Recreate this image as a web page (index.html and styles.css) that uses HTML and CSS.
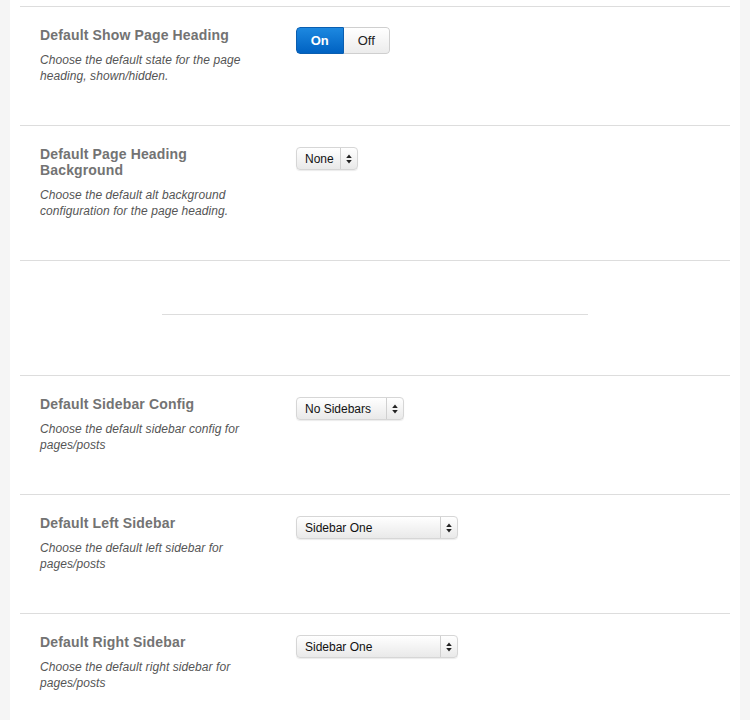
FILE: index.html
```html
<!DOCTYPE html>
<html>
<head>
<meta charset="utf-8">
<link rel="stylesheet" href="styles.css">
</head>
<body>
<div class="panel">
  <div class="row">
    <div class="label">
      <h3>Default Show Page Heading</h3>
      <p>Choose the default state for the page heading, shown/hidden.</p>
    </div>
    <div class="control">
      <div class="toggle"><span class="on">On</span><span class="off">Off</span></div>
    </div>
  </div>
  <div class="row">
    <div class="label">
      <h3>Default Page Heading Background</h3>
      <p>Choose the default alt background configuration for the page heading.</p>
    </div>
    <div class="control">
      <div class="select w-none"><span class="val">None</span><span class="arr"><svg width="6" height="10" viewBox="0 0 6 10"><path d="M3 0.5 L5.8 4 L0.2 4 Z M3 9.5 L5.8 6 L0.2 6 Z" fill="#222"/></svg></span></div>
    </div>
  </div>
  <div class="row sep">
    <div class="midline"></div>
  </div>
  <div class="row">
    <div class="label">
      <h3>Default Sidebar Config</h3>
      <p>Choose the default sidebar config for pages/posts</p>
    </div>
    <div class="control">
      <div class="select w-nosb"><span class="val">No Sidebars</span><span class="arr"><svg width="6" height="10" viewBox="0 0 6 10"><path d="M3 0.5 L5.8 4 L0.2 4 Z M3 9.5 L5.8 6 L0.2 6 Z" fill="#222"/></svg></span></div>
    </div>
  </div>
  <div class="row">
    <div class="label">
      <h3>Default Left Sidebar</h3>
      <p>Choose the default left sidebar for pages/posts</p>
    </div>
    <div class="control">
      <div class="select w-sb"><span class="val">Sidebar One</span><span class="arr"><svg width="6" height="10" viewBox="0 0 6 10"><path d="M3 0.5 L5.8 4 L0.2 4 Z M3 9.5 L5.8 6 L0.2 6 Z" fill="#222"/></svg></span></div>
    </div>
  </div>
  <div class="row">
    <div class="label">
      <h3>Default Right Sidebar</h3>
      <p>Choose the default right sidebar for pages/posts</p>
    </div>
    <div class="control">
      <div class="select w-sb"><span class="val">Sidebar One</span><span class="arr"><svg width="6" height="10" viewBox="0 0 6 10"><path d="M3 0.5 L5.8 4 L0.2 4 Z M3 9.5 L5.8 6 L0.2 6 Z" fill="#222"/></svg></span></div>
    </div>
  </div>
</div>
</body>
</html>
```

FILE: styles.css
```css
html, body {
  margin: 0;
  padding: 0;
}
body {
  background: #f5f5f5;
  font-family: "Liberation Sans", Arial, Helvetica, sans-serif;
  height: 720px;
  overflow: hidden;
}
.panel {
  background: #fff;
  margin: 0 10px;
  padding: 6px 10px 0;
  min-height: 714px;
}
.row {
  display: flex;
  border-top: 1px solid #dddddd;
  padding: 20px 20px 41px;
}
.label {
  width: 210px;
  flex: none;
}
.label h3 {
  margin: 0;
  font-size: 14px;
  line-height: 16px;
  font-weight: bold;
  color: #737373;
  letter-spacing: 0.15px;
}
.label p {
  margin: 9px 0 0;
  font-size: 12px;
  line-height: 16px;
  font-style: italic;
  color: #555;
  letter-spacing: 0.08px;
}
.control {
  padding-left: 46px;
}
.toggle {
  display: flex;
  width: 94px;
  height: 27px;
  border-radius: 4px;
  overflow: hidden;
  box-sizing: border-box;
}
.toggle span {
  flex: 1;
  display: flex;
  align-items: center;
  justify-content: center;
  font-size: 13px;
}
.toggle .on {
  background: linear-gradient(#1d88e0, #0062c2);
  color: #fff;
  font-weight: bold;
  border: 1px solid #0a5eb0;
  border-radius: 4px 0 0 4px;
}
.toggle .off {
  background: linear-gradient(#ffffff, #ececec);
  color: #222;
  border: 1px solid #cfcfcf;
  border-left: none;
  border-radius: 0 4px 4px 0;
}
.select {
  margin-top: 1px;
  display: flex;
  height: 23px;
  box-sizing: border-box;
  border: 1px solid #d6d6d6;
  border-radius: 4px;
  background: linear-gradient(#ffffff, #e9e9e9);
  box-shadow: 0 1px 1px rgba(0,0,0,0.08);
  font-size: 12px;
  color: #111;
}
.select .val {
  flex: 1;
  display: flex;
  align-items: center;
  padding-left: 8px;
}
.select .arr {
  width: 16px;
  border-left: 1px solid #d0d0d0;
  display: flex;
  align-items: center;
  justify-content: center;
}
.w-none { width: 62px; }
.w-nosb { width: 108px; }
.w-sb { width: 162px; }
.row.sep {
  display: block;
  padding: 53px 0 60px;
}
.midline {
  width: 426px;
  margin: 0 auto;
  border-top: 1px solid #dddddd;
}
```
